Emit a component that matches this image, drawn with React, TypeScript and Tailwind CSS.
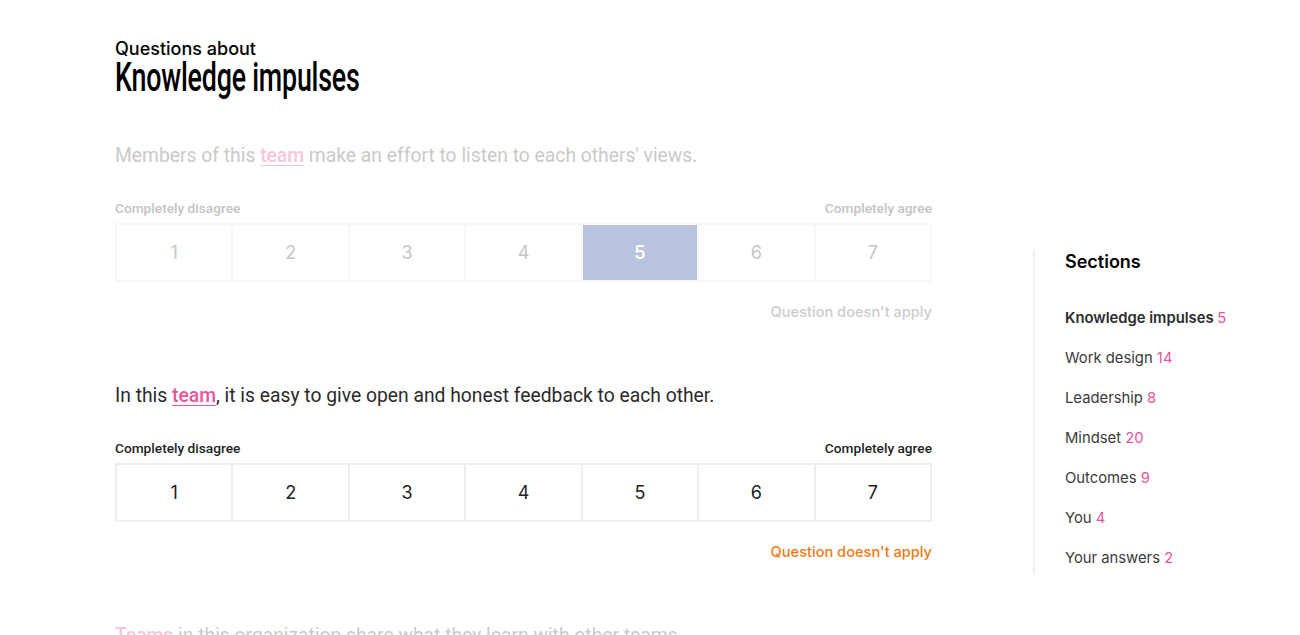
import React from "react";

type Question = {
  before: string;
  link: string;
  after: string;
  selected?: number;
  active: boolean;
};

const questions: Question[] = [
  { before: "Members of this ", link: "team", after: " make an effort to listen to each others' views.", selected: 5, active: false },
  { before: "In this ", link: "team", after: ", it is easy to give open and honest feedback to each other.", active: true },
  { before: "", link: "Teams", after: " in this organization share what they learn with other teams.", active: false },
];

const sections = [
  { name: "Knowledge impulses", count: 5, current: true },
  { name: "Work design", count: 14 },
  { name: "Leadership", count: 8 },
  { name: "Mindset", count: 20 },
  { name: "Outcomes", count: 9 },
  { name: "You", count: 4 },
  { name: "Your answers", count: 2 },
];

function QuestionBlock({ q }: { q: Question }) {
  return (
    <div className="mb-[60px]">
      <p
        className={
          "text-[19.3px] leading-[28px] font-[Roboto,sans-serif] " +
          (q.active ? "text-[#2b2b2b]" : "text-[#cacaca]")
        }
      >
        {q.before}
        <a
          className={
            "underline underline-offset-[3px] decoration-1 font-medium " +
            (q.active ? "text-[#e8559a]" : "text-[#f8c3dc]")
          }
        >
          {q.link}
        </a>
        {q.after}
      </p>
      <div
        className={
          "mt-[29px] flex justify-between text-[13.7px] leading-[18px] font-medium font-[Roboto,sans-serif] " +
          (q.active ? "text-[#1f1f1f]" : "text-[#c4c4c4]")
        }
      >
        <span>Completely disagree</span>
        <span>Completely agree</span>
      </div>
      <div
        className={
          "mt-[6px] grid grid-cols-7 border-2 gap-[2px] " +
          (q.active ? "border-[#eeeeee] bg-[#eeeeee]" : "border-[#f7f7f7] bg-[#f7f7f7]")
        }
      >
        {[1, 2, 3, 4, 5, 6, 7].map((n) => {
          const sel = q.selected === n;
          return (
            <div
              key={n}
              className={
                "h-[55px] flex items-center justify-center text-[18px] font-[Inter,sans-serif] " +
                (sel
                  ? "bg-[#b9c3dd] text-white font-semibold"
                  : "bg-white " + (q.active ? "text-[#222]" : "text-[#c6c6c6]"))
              }
            >
              {n}
            </div>
          );
        })}
      </div>
      <div
        className={
          "mt-[20px] text-right text-[14.6px] leading-[20px] font-medium font-[Inter,sans-serif] " +
          (q.active ? "text-[#f07a12]" : "text-[#cccccc]")
        }
      >
        Question doesn't apply
      </div>
    </div>
  );
}

export default function App() {
  return (
    <main className="min-h-screen bg-white flex pl-[115px]">
      <div className="w-[817px] pt-[39px]">
        <div className="text-[18px] leading-[20px] text-black font-[Inter,sans-serif] font-medium">
          Questions about
        </div>
        <h1 className="text-[40px] leading-[38px] text-black font-medium font-[Roboto,sans-serif] scale-x-[0.67] origin-left whitespace-nowrap tracking-[-0.3px]">
          Knowledge impulses
        </h1>
        <div className="mt-[45px]">
          {questions.map((q, i) => (
            <QuestionBlock key={i} q={q} />
          ))}
        </div>
      </div>
      <aside className="ml-[101px] mt-[250px] h-[324px] border-l-2 border-[#f0f0f0] pl-[30px] font-[Inter,sans-serif]">
        <h2 className="text-[18px] font-semibold text-black leading-[24px]">Sections</h2>
        <ul className="mt-[33px] flex flex-col gap-[18px]">
          {sections.map((s) => (
            <li
              key={s.name}
              className={"text-[14.8px] leading-[22px] whitespace-nowrap " + (s.current ? "font-semibold text-[#2b2b2b]" : "text-[#3a3a3a]")}
            >
              {s.name} <span className="text-[#e8559a] font-normal">{s.count}</span>
            </li>
          ))}
        </ul>
      </aside>
    </main>
  );
}
